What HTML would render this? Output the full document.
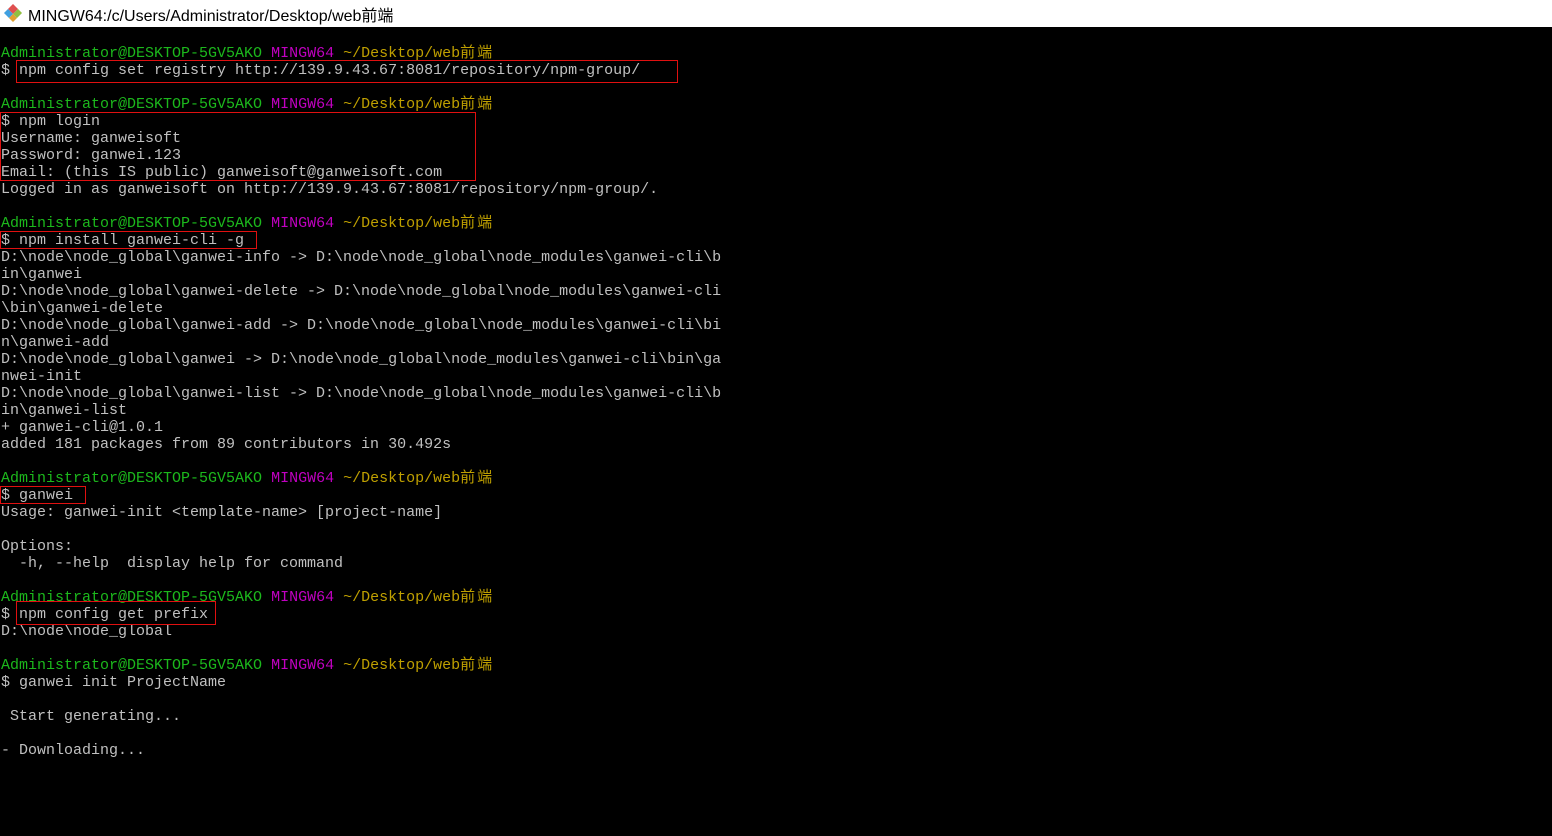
<!DOCTYPE html>
<html><head><meta charset="utf-8"><style>
body{margin:0;width:1552px;height:836px;background:#000;overflow:hidden;position:relative}
#tb{position:absolute;left:0;top:0;width:1552px;height:27px;background:#fff;font:16px "Liberation Sans","Noto Sans CJK SC",sans-serif;color:#000}
#tb span{position:absolute;left:28px;top:2px;white-space:nowrap}
#term{position:absolute;left:1px;top:45px;font:15px/17px "Liberation Mono","Noto Sans CJK SC",monospace;color:#c0c0c0;white-space:pre}
.g{color:#1cb81c}.m{color:#c000c0}.y{color:#bfa000}
.c{display:inline-block;width:17px}
.b{position:absolute;border:1px solid #e01010}
</style></head><body>
<div id="tb"><svg style="position:absolute;left:2px;top:3px" width="22" height="20" viewBox="0 0 22 20"><path d="M11 1L20 10 11 19 2 10Z" fill="#e8e8e8"/><path d="M6 6l5-5 5 5-5 5z" fill="#e05050"/><path d="M2 10l4-4 5 5-4 4z" fill="#40a0e0"/><path d="M11 11l5-5 4 4-5 5z" fill="#90c040"/><path d="M7 15l4-4 4 4-4 4z" fill="#e0a030"/></svg><span>MINGW64:/c/Users/Administrator/Desktop/web前端</span></div>
<div id="term"><span class="g">Administrator@DESKTOP-5GV5AKO</span> <span class="m">MINGW64</span> <span class="y">~/Desktop/web<span class="c">前</span><span class="c">端</span></span>
$ npm config set registry http://139.9.43.67:8081/repository/npm-group/

<span class="g">Administrator@DESKTOP-5GV5AKO</span> <span class="m">MINGW64</span> <span class="y">~/Desktop/web<span class="c">前</span><span class="c">端</span></span>
$ npm login
Username: ganweisoft
Password: ganwei.123
Email: (this IS public) ganweisoft@ganweisoft.com
Logged in as ganweisoft on http://139.9.43.67:8081/repository/npm-group/.

<span class="g">Administrator@DESKTOP-5GV5AKO</span> <span class="m">MINGW64</span> <span class="y">~/Desktop/web<span class="c">前</span><span class="c">端</span></span>
$ npm install ganwei-cli -g
D:\node\node_global\ganwei-info -&gt; D:\node\node_global\node_modules\ganwei-cli\b
in\ganwei
D:\node\node_global\ganwei-delete -&gt; D:\node\node_global\node_modules\ganwei-cli
\bin\ganwei-delete
D:\node\node_global\ganwei-add -&gt; D:\node\node_global\node_modules\ganwei-cli\bi
n\ganwei-add
D:\node\node_global\ganwei -&gt; D:\node\node_global\node_modules\ganwei-cli\bin\ga
nwei-init
D:\node\node_global\ganwei-list -&gt; D:\node\node_global\node_modules\ganwei-cli\b
in\ganwei-list
+ ganwei-cli@1.0.1
added 181 packages from 89 contributors in 30.492s

<span class="g">Administrator@DESKTOP-5GV5AKO</span> <span class="m">MINGW64</span> <span class="y">~/Desktop/web<span class="c">前</span><span class="c">端</span></span>
$ ganwei
Usage: ganwei-init &lt;template-name&gt; [project-name]

Options:
  -h, --help  display help for command

<span class="g">Administrator@DESKTOP-5GV5AKO</span> <span class="m">MINGW64</span> <span class="y">~/Desktop/web<span class="c">前</span><span class="c">端</span></span>
$ npm config get prefix
D:\node\node_global

<span class="g">Administrator@DESKTOP-5GV5AKO</span> <span class="m">MINGW64</span> <span class="y">~/Desktop/web<span class="c">前</span><span class="c">端</span></span>
$ ganwei init ProjectName

 Start generating...

- Downloading...</div>
<div class="b" style="left:16px;top:60px;width:660px;height:21px"></div>
<div class="b" style="left:0;top:112px;width:474px;height:67px"></div>
<div class="b" style="left:0;top:231px;width:255px;height:16px"></div>
<div class="b" style="left:0;top:486px;width:84px;height:16px"></div>
<div class="b" style="left:16px;top:601px;width:198px;height:22px"></div>
</body></html>
